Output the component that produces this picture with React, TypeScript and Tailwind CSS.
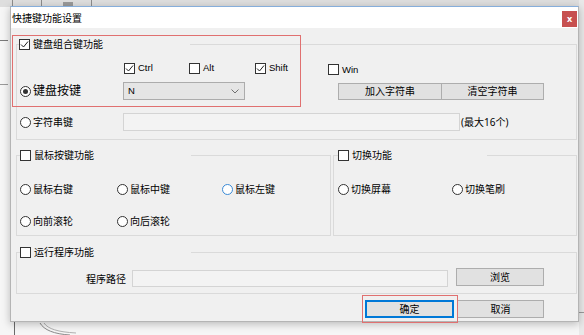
import React from 'react';

const FONT = { fontFamily: '"Noto Sans", "Noto Sans CJK SC", sans-serif' };
const LATIN = { fontFamily: '"Liberation Sans", Arial, sans-serif' };

function CheckBox({ checked, label, latin, className = '' }: { checked?: boolean; label: string; latin?: boolean; className?: string }) {
  return (
    <span className={`flex items-center gap-[3px] ${className}`}>
      <span className="w-[11px] h-[11px] border border-[#333] bg-white flex items-center justify-center shrink-0">
        {checked && (
          <svg width="9" height="9" viewBox="0 0 9 9">
            <path d="M1 4.5 L3.5 7 L8 1.5" fill="none" stroke="#222" strokeWidth="1" />
          </svg>
        )}
      </span>
      <span
        className={`${latin ? 'text-[9.5px]' : 'text-[10px]'} leading-none text-black whitespace-nowrap`}
        style={latin ? LATIN : undefined}
      >
        {label}
      </span>
    </span>
  );
}

function Radio({ checked, label, hover, big, className = '' }: { checked?: boolean; label: string; hover?: boolean; big?: boolean; className?: string }) {
  return (
    <span className={`flex items-center gap-[2px] ${className}`}>
      <span
        className={`w-[11px] h-[11px] rounded-full border bg-white flex items-center justify-center shrink-0 ${
          hover ? 'border-[#3a8ad6]' : 'border-[#333]'
        }`}
      >
        {checked && <span className="w-[5px] h-[5px] rounded-full bg-[#333]" />}
      </span>
      <span className={`${big ? 'text-[12px]' : 'text-[10px]'} leading-none text-black whitespace-nowrap`}>{label}</span>
    </span>
  );
}

function Button({ label, className = '' }: { label: string; className?: string }) {
  return (
    <div className={`h-[17px] bg-[#e1e1e1] border border-[#adadad] flex items-center justify-center text-[10px] text-black ${className}`}>
      {label}
    </div>
  );
}

function Group({ title, checked, legendWidth, legendMl, className = '', children }: { title: string; checked?: boolean; legendWidth: string; legendMl: string; className?: string; children: React.ReactNode }) {
  return (
    <fieldset className={`border border-[#dadada] ${className}`}>
      <legend className={`${legendWidth} ${legendMl} h-[16px]`}>
        <span className="flex items-center h-[16px]">
          <CheckBox checked={checked} label={title} />
        </span>
      </legend>
      {children}
    </fieldset>
  );
}

export default function App() {
  return (
    <div className="relative w-[584px] h-[335px] overflow-hidden bg-[#f6f6f6]" style={FONT}>
      {/* application behind the dialog */}
      <svg className="absolute inset-0" width="584" height="335">
        <rect x="0" y="0" width="584" height="7" fill="#dedede" />
        <line x1="12.5" y1="0" x2="12.5" y2="7" stroke="#8c8c8c" />
        <line x1="41.5" y1="0" x2="41.5" y2="7" stroke="#8c8c8c" />
        <rect x="63" y="2" width="10" height="5" fill="#9a9a9a" />
        <line x1="91.5" y1="0" x2="91.5" y2="7" stroke="#8c8c8c" />
        <line x1="0" y1="40.5" x2="8" y2="40.5" stroke="#7a7a7a" />
        <line x1="0" y1="84.5" x2="8" y2="84.5" stroke="#9a9a9a" />
        <rect x="579" y="0" width="5" height="335" fill="#e9e9e9" />
        <line x1="579" y1="312.5" x2="584" y2="312.5" stroke="#9a9a9a" />
        <line x1="14.5" y1="322" x2="14.5" y2="335" stroke="#6b6b6b" />
        <path d="M40 323 C44 330 54 334 70 335" fill="none" stroke="#8a8a8a" />
        <path d="M44 323 C48 329 58 332 76 333" fill="none" stroke="#b0b0b0" />
      </svg>

      {/* dialog */}
      <div className="absolute left-[10px] top-[6px] w-[569px] h-[316px] border border-[#b4b4b4] border-t-[#86aedb] bg-[#f0f0f0] shadow-[0_2px_8px_rgba(0,0,0,0.25)] flex flex-col">
        <div className="h-[21px] bg-white flex items-center justify-between pl-[1px] pr-[1px]">
          <span className="text-[10px] text-black" style={{ fontFamily: '"Noto Sans CJK SC", sans-serif' }}>
            快捷键功能设置
          </span>
          <div className="w-[15px] h-[16px] bg-[#c75050] flex items-center justify-center text-white text-[9px] font-bold leading-none mt-[2px]">
            x
          </div>
        </div>

        <div className="flex-1 pt-[8px] pl-[5px] pr-[1px] flex flex-col">
          {/* keyboard combination */}
          <Group title="键盘组合键功能" checked legendWidth="w-[171px]" legendMl="ml-[2px]" className="pb-[8px]">
            <div className="mt-[9px] h-[14px] flex items-center pl-[107px]">
              <CheckBox checked latin label="Ctrl" className="w-[65px]" />
              <CheckBox latin label="Alt" className="w-[66px]" />
              <CheckBox checked latin label="Shift" className="w-[73px]" />
              <CheckBox latin label="Win" className="mt-[3px]" />
            </div>
            <div className="mt-[7px] h-[18px] flex items-center">
              <div className="w-[106px] pl-[3px]">
                <Radio checked big label="键盘按键" />
              </div>
              <div className="w-[122px] h-[18px] bg-[#e5e5e5] border border-[#acacac] flex items-center justify-between pl-[4px] pr-[5px]">
                <span className="text-[9.5px] text-black" style={LATIN}>N</span>
                <svg width="8" height="5" viewBox="0 0 8 5">
                  <path d="M0.5 0.5 L4 4 L7.5 0.5" fill="none" stroke="#707070" strokeWidth="1" />
                </svg>
              </div>
              <Button label="加入字符串" className="ml-[93px] w-[104px]" />
              <Button label="清空字符串" className="w-[102px] border-l-0" />
            </div>
            <div className="mt-[13px] h-[18px] flex items-center">
              <div className="w-[106px] pl-[3px]">
                <Radio label="字符串键" />
              </div>
              <div className="w-[337px] h-[18px] bg-[#f3f3f3] border border-[#d4d4d4]" />
              <span className="text-[10px] text-black ml-[1px]">(最大16个)</span>
            </div>
          </Group>

          {/* mouse + switch */}
          <div className="mt-[7px] flex gap-[2px]">
            <Group title="鼠标按键功能" legendWidth="w-[171px]" legendMl="ml-[3px]" className="w-[315px] pb-[6px]">
              <div className="mt-[18px] h-[16px] flex items-center pl-[3px]">
                <Radio label="鼠标右键" className="w-[97px]" />
                <Radio label="鼠标中键" className="w-[105px]" />
                <Radio hover label="鼠标左键" />
              </div>
              <div className="mt-[16px] h-[16px] flex items-center pl-[3px]">
                <Radio label="向前滚轮" className="w-[97px]" />
                <Radio label="向后滚轮" />
              </div>
            </Group>
            <Group title="切换功能" legendWidth="w-[149px]" legendMl="ml-[4px]" className="flex-1 pb-[6px]">
              <div className="mt-[18px] h-[16px] flex items-center pl-[4px]">
                <Radio label="切换屏幕" className="w-[114px]" />
                <Radio label="切换笔刷" />
              </div>
            </Group>
          </div>

          {/* run program */}
          <Group title="运行程序功能" legendWidth="w-[171px]" legendMl="ml-[3px]" className="mt-[8px] pb-[6px]">
            <div className="mt-[8px] h-[19px] flex items-start">
              <span className="w-[110px] pr-[1px] text-right text-[10px] text-black leading-none mt-[6px]">程序路径</span>
              <div className="ml-[5px] mt-[2px] w-[316px] h-[17px] bg-[#f3f3f3] border border-[#d4d4d4]" />
              <Button label="浏览" className="ml-[8px] w-[88px] h-[18px]" />
            </div>
          </Group>

          {/* dialog buttons */}
          <div className="mt-[6px] flex">
            <div className="ml-[349px] w-[89px] h-[18px] bg-[#e1e1e1] border-2 border-[#0078d7] flex items-center justify-center text-[10px] text-black">
              确定
            </div>
            <div className="ml-[3px] w-[87px] h-[18px] bg-[#e1e1e1] border border-[#adadad] flex items-center justify-center text-[10px] text-black">
              取消
            </div>
          </div>
        </div>
      </div>

      {/* red annotation frames */}
      <div className="absolute left-[12px] top-[35px] w-[289px] h-[72px] border border-[#e07070]" />
      <div className="absolute left-[362px] top-[295px] w-[96px] h-[28px] border border-[#e07070]" />
    </div>
  );
}
